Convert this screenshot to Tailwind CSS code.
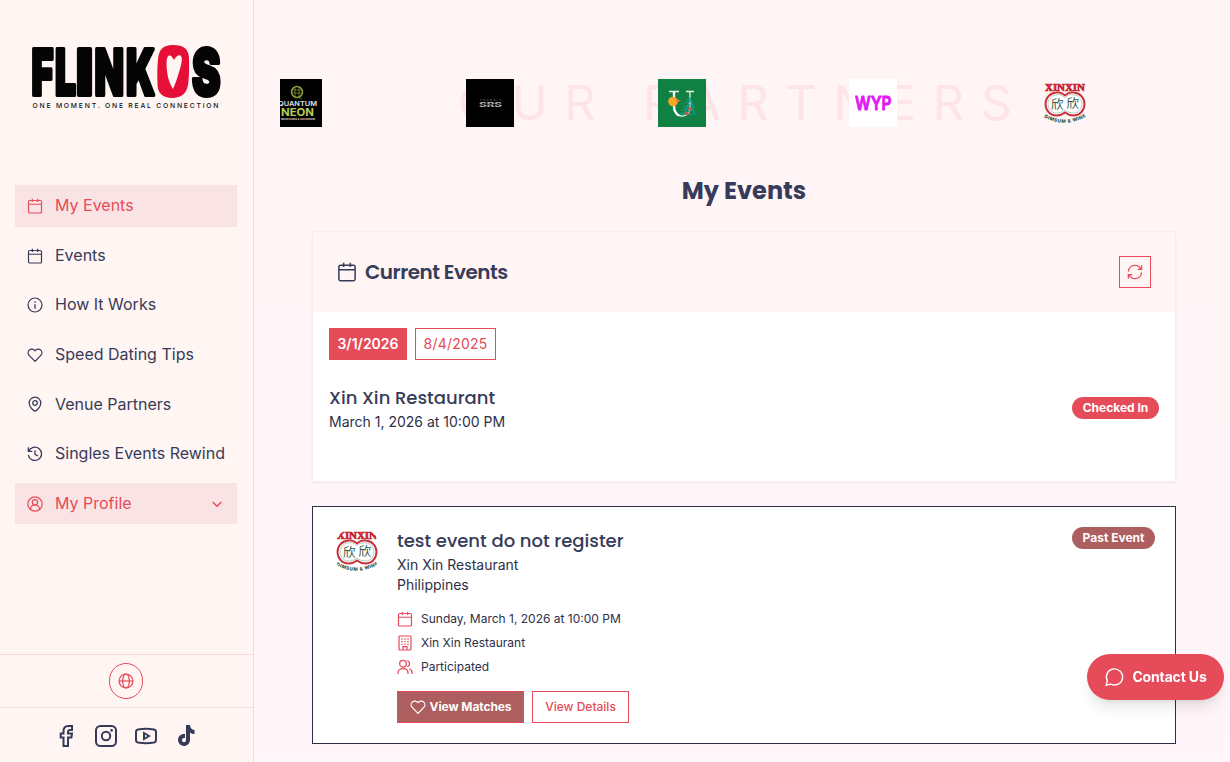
<!DOCTYPE html>
<html lang="en">
  <head>
    <meta charset="UTF-8" />
    <title>My Events - Flinkos</title>
    <meta name="viewport" content="width=device-width, initial-scale=1.0" />
    <script src="https://cdn.jsdelivr.net/npm/@tailwindcss/browser@4"></script>
  </head>

  <body class="flex h-screen overflow-hidden bg-linear-to-b from-[#fff5f5] to-[#fff5fa] font-['Inter',sans-serif] text-[#2d3048]">
    <!-- Shared icons -->
    <svg class="hidden">
      <symbol id="calendar" viewBox="0 0 24 24">
        <rect x="2.25" y="3.75" width="19.5" height="18.75" rx="2" />
        <path d="M2.25 9.4h19.5M8 1v5M16 1v5" />
      </symbol>
      <symbol id="heart" viewBox="0 0 24 24">
        <path d="M12 21.5 3.3 12.6a5.6 5.6 0 0 1 0-7.9 5.5 5.5 0 0 1 7.8 0l.9.9.9-.9a5.5 5.5 0 0 1 7.8 0 5.6 5.6 0 0 1 0 7.9Z" />
      </symbol>
      <symbol id="xinxin" viewBox="0 0 48 48">
        <text x="4" y="12" font-family="Liberation Serif, serif" font-weight="700" font-size="10.5" textLength="40" lengthAdjust="spacingAndGlyphs" fill="#c9252d" stroke="#c9252d" stroke-width=".7">XINXIN</text>
        <path d="M24 16.2c3-2.5 6-3.2 9-2.7 6.5.8 10.5 5.5 10.5 11.5s-4.5 11.500-11 11.500c-3.300 0-6-1-8.500-3-2.500 2-5.200 3-8.500 3-6.500 0-11-5.500-11-11.500s4-10.700 10.500-11.500c3-.5 6 .2 9 2.700Z" fill="#fff" stroke="#cb3038" stroke-width="1.900" />
        <path d="M24 18.500c3-2.600 6-3.300 9-2.600 5 .9 8 4.500 8 9.100s-3.500 9-8.500 9c-3.300 0-6-1-8.500-3-2.500 2-5.200 3-8.500 3-5 0-8.500-4.400-8.500-9s3-8.200 8-9.100c3-.7 6 0 9 2.600Z" fill="none" stroke="#89a49a" stroke-width=".6" />
        <text x="10" y="29.500" font-family="Noto Sans CJK SC, sans-serif" font-size="12.500" fill="#30584a">欣</text>
        <text x="25.500" y="29" font-family="Noto Sans CJK SC, sans-serif" font-size="12.500" fill="#30584a">欣</text>
        <path id="ring" d="M2.500 38Q24 50 46 37" fill="none" />
        <text font-family="Inter, sans-serif" font-weight="800" font-size="4.700" letter-spacing=".5" fill="#285344"><textPath href="#ring" startOffset="50%" text-anchor="middle">DIMSUM &amp; WINE</textPath></text>
      </symbol>
    </svg>

    <!-- Sidebar -->
    <aside class="flex w-[254px] shrink-0 flex-col border-r border-[#f5dadd] bg-[#fff5f3]">
      <div class="px-[30px] pt-10">
        <svg class="h-[72px] w-[194px]" viewBox="0 0 194 72">
          <g font-family="Inter, sans-serif" font-weight="900" font-size="63" fill="#050505" stroke="#050505" stroke-width="4" stroke-linejoin="round">
            <text x="1.500" y="54.600" textLength="22" lengthAdjust="spacingAndGlyphs">F</text>
            <text x="25" y="54.600" textLength="21" lengthAdjust="spacingAndGlyphs">L</text>
            <text x="46" y="54.600" textLength="17" lengthAdjust="spacingAndGlyphs">I</text>
            <text x="64.500" y="54.600" textLength="29.500" lengthAdjust="spacingAndGlyphs">N</text>
            <text x="96" y="54.600" textLength="29" lengthAdjust="spacingAndGlyphs">K</text>
            <text x="162" y="54.600" textLength="28.500" lengthAdjust="spacingAndGlyphs">S</text>
          </g>
          <path d="M143 5c11 0 15.500 4 16 13 .3 8 .1 18-.8 26-1.300 9-6.700 14-16.200 14s-14-5-14.500-13c-.4-9-.3-18 .5-26 1-9 4.500-14 15-14Z" fill="#e60f37" />
          <path d="M144 20c2-3.500 4.500-5.500 6.500-4.500 2.500 2 1 9-1 15-1.800 6.500-4 13-6.500 18.500-3-4.500-5.300-11-6-18-.6-7-.8-13 1.300-15 2-1.500 4 .5 5.700 4Z" fill="#fff5f3" />
          <text x="2.500" y="68" font-family="Inter, sans-serif" font-weight="500" font-size="6.800" textLength="186" fill="#111">ONE MOMENT. ONE REAL CONNECTION</text>
        </svg>
      </div>

      <nav class="mt-[73.200px] flex flex-col gap-2 px-[15px] pr-4 text-base leading-[25.6px] text-[#373b5a]">
        <a class="flex items-center gap-3 bg-[#fae3e5] px-3 py-2 text-[#e54b58]">
          <svg class="size-4 fill-none stroke-current stroke-[1.800]"><use href="#calendar" /></svg>
          My Events
        </a>
        <a class="flex items-center gap-3 px-3 py-2">
          <svg class="size-4 fill-none stroke-current stroke-[1.800]"><use href="#calendar" /></svg>
          Events
        </a>
        <a class="flex items-center gap-3 px-3 py-2">
          <svg class="size-4 fill-none stroke-current stroke-[1.800]" viewBox="0 0 24 24">
            <circle cx="12" cy="12" r="10.500" />
            <path d="M12 11v6.500M12 6.500v2" stroke-width="2" />
          </svg>
          How It Works
        </a>
        <a class="flex items-center gap-3 px-3 py-2">
          <svg class="size-4 fill-none stroke-current stroke-[1.900]"><use href="#heart" /></svg>
          Speed Dating Tips
        </a>
        <a class="flex items-center gap-3 px-3 py-2">
          <svg class="size-4 fill-none stroke-current stroke-[1.900]" viewBox="0 0 24 24">
            <path d="M12 22.500c-2 0-8.700-6-8.700-12a8.700 8.700 0 0 1 17.400 0c0 6-6.700 12-8.700 12Z" />
            <circle cx="12" cy="10.500" r="3.500" />
          </svg>
          Venue Partners
        </a>
        <a class="flex items-center gap-3 whitespace-nowrap px-3 py-2">
          <svg class="size-4 fill-none stroke-current stroke-[1.900]" viewBox="0 0 24 24">
            <path d="M2 2v6h6M2.500 8a10 10 0 1 1-.5 5.500M12 6.500v6l4.500 2.500" />
          </svg>
          Singles Events Rewind
        </a>
        <a class="flex items-center gap-3 bg-[#fae3e5] px-3 py-2 text-[#e54b58]">
          <svg class="size-4 fill-none stroke-current stroke-[1.800]" viewBox="0 0 24 24">
            <circle cx="12" cy="12" r="10.700" />
            <circle cx="12" cy="9.500" r="4" />
            <path d="M5 20c.5-4 3-6.500 7-6.500s6.500 2.500 7 6.500" />
          </svg>
          My Profile
          <svg class="ml-auto size-4 fill-none stroke-current stroke-2" viewBox="0 0 24 24"><path d="m5.500 9 6.500 6.500L18.500 9" /></svg>
        </a>
      </nav>

      <div class="mt-auto flex h-[53px] items-center justify-center border-t border-[#fad4d8] pr-0.5">
        <button class="flex h-9 w-[34px] items-center justify-center rounded-full border border-[#e54b58] text-[#e54b58]">
          <svg class="size-4 fill-none stroke-current stroke-[1.800]" viewBox="0 0 24 24">
            <circle cx="12" cy="12" r="10.500" />
            <ellipse cx="12" cy="12" rx="5" ry="10.500" />
            <path d="M1.500 12h21" />
          </svg>
        </button>
      </div>

      <div class="flex h-[55px] items-center justify-center gap-4 border-t border-[#f5dadd] pt-0.5 pr-0.5 text-[#373b5a]">
        <svg class="size-6 fill-none stroke-current stroke-2" viewBox="0 0 24 24">
          <path d="M9.500 22v-8.500H6.700V9.500h2.800V7c0-3.500 2-5 5-5H18v4h-2c-1.500 0-2 .7-2 2v1.500h4l-.6 4H14V22Z" />
        </svg>
        <svg class="size-6 fill-none stroke-current stroke-2" viewBox="0 0 24 24">
          <rect x="2" y="2" width="20" height="20" rx="4.500" />
          <circle cx="12" cy="12" r="4.200" />
          <circle cx="17.600" cy="6.400" r="1.300" class="fill-current stroke-none" />
        </svg>
        <svg class="size-6 fill-none stroke-current stroke-2" viewBox="0 0 24 24">
          <path d="M4 5.500c5-1 11-1 16 0 1.300.3 2 1 2 2.500v8c0 1.500-.7 2.200-2 2.500-5 1-11 1-16 0-1.300-.3-2-1-2-2.500V8c0-1.500.7-2.200 2-2.500Z" />
          <path d="m10 9 5 3-5 3Z" />
        </svg>
        <svg class="size-6 fill-current" viewBox="0 0 24 24">
          <path d="M12 1h4c.2 3 1.700 4.700 4.500 5v4c-1.700 0-3.100-.5-4.500-1.500v7c0 4.200-2.800 6.500-6 6.500a6 6 0 0 1-6-6c0-3.800 3-6.400 7-6v4c-1.800-.4-3 .5-3 2s1 2.200 2 2.200c1.300 0 2-.9 2-2.400Z" />
        </svg>
      </div>
    </aside>

    <main class="flex min-w-0 flex-1 flex-col items-center pl-1">
      <!-- Partners -->
      <section class="relative mt-[79px] h-12 w-[928px] shrink-0 overflow-hidden">
        <p class="absolute -top-3 left-[178px] whitespace-nowrap text-5xl leading-[72px] tracking-[17.100px] text-[#fee4e7]">OUR PARTNERS</p>
        <div class="relative -ml-1.5 flex gap-[143.800px]">
          <svg class="size-12 shrink-0 bg-black" viewBox="0 0 48 48">
            <circle cx="23" cy="13" r="5.500" fill="none" stroke="#8c9e3c" stroke-width="1.500" />
            <path d="M18 11h10M18 14h10M21 8v10M25 8v10M24 18l4 2" stroke="#8c9e3c" stroke-width=".7" />
            <g font-family="Inter, sans-serif">
              <text x="4" y="27" font-size="6.500" font-weight="600" textLength="39" lengthAdjust="spacingAndGlyphs" fill="#e4e4e4">QUANTUM</text>
              <text x="7" y="36.500" font-size="10.500" font-weight="700" textLength="33" lengthAdjust="spacingAndGlyphs" fill="#b5cc58">NEON</text>
              <text x="7" y="40.500" font-size="2.400" font-weight="700" textLength="34" lengthAdjust="spacingAndGlyphs" fill="#ddd">NEON SIGNS &amp; LED DESIGN</text>
            </g>
          </svg>
          <svg class="size-12 shrink-0 bg-black" viewBox="0 0 48 48" font-family="Inter, sans-serif">
            <text x="14" y="22.300" font-size="2.600" textLength="21" fill="#999">TRANSIT</text>
            <text x="13" y="27.500" font-size="5.800" font-weight="800" textLength="23" lengthAdjust="spacingAndGlyphs" fill="#b5b5b5">SRS</text>
            <path d="M13 25.400h23" stroke="#000" stroke-width=".6" />
          </svg>
          <svg class="size-12 shrink-0 bg-[#108043]" viewBox="0 0 48 48">
            <path d="M11 12.500h10M28 12.500h8M16 13v14c0 6 3 10 8 10 5.500 0 8-4 8-10V13" fill="none" stroke="#e9f3e5" stroke-width="1.300" />
            <path d="M16 13v14c0 5 2 8 5 9.500" fill="none" stroke="#fff" stroke-width="2.300" />
            <path d="m33 18-7 18M33 20l-4 1M34 22l-7 2M36 25l-11 3M37 28l-14 3M36 31l-14 4M35 35l-12 1M32 18l5 18" stroke="#16a09a" stroke-width="1" />
            <circle cx="15" cy="22.500" r="4.800" fill="#f5a623" />
            <path d="m18 20 5 1.500-4 2Z" fill="#e2783f" />
            <circle cx="32" cy="30" r="1.800" fill="#e05543" /><circle cx="29" cy="34.500" r="1.800" fill="#e05543" />
          </svg>
          <svg class="size-12 shrink-0 bg-white" viewBox="0 0 48 48">
            <text x="6" y="31" font-family="Inter, sans-serif" font-weight="600" font-size="19" textLength="36.500" lengthAdjust="spacingAndGlyphs" fill="#e019f5" stroke="#e019f5" stroke-width=".9" stroke-linejoin="round">WYP</text>
          </svg>
          <svg class="size-12 shrink-0"><use href="#xinxin" /></svg>
        </div>
      </section>

      <h1 class="mt-[46px] font-['Poppins','Inter',sans-serif] text-2xl font-bold leading-9 text-[#373b5a]">My Events</h1>

      <!-- Current events -->
      <section class="mt-[22px] h-[251px] w-[864px] shrink-0 border border-[#fbecee] bg-white shadow-xs">
        <div class="flex h-20 items-center bg-[#fff5f5] px-6 text-[#373b5a]">
          <svg class="mr-2 size-5 fill-none stroke-current stroke-[1.800]"><use href="#calendar" /></svg>
          <h2 class="font-['Poppins','Inter',sans-serif] text-xl font-semibold tracking-tight">Current Events</h2>
          <button class="ml-auto flex size-8 items-center justify-center border border-[#e54b58] text-[#e54b58]">
            <svg class="size-4 fill-none stroke-current stroke-[1.900]" viewBox="0 0 24 24">
              <path d="M2 11.500C2.500 5.500 7 2 12 2c4 0 7 2 9 5.500M22 2v6h-6M22 12.500C21.500 18.500 17 22 12 22c-4 0-7-2-9-5.500M2 22v-6h6" />
            </svg>
          </button>
        </div>
        <div class="p-4">
          <div class="flex gap-2 text-sm">
            <button class="h-8 w-[78px] bg-[#e54b58] font-semibold text-white">3/1/2026</button>
            <button class="h-8 w-[81px] border border-[#e54b58] tracking-[0.2px] text-[#e54b58]">8/4/2025</button>
          </div>
          <div class="mt-6 flex items-center justify-between">
            <div>
              <h3 class="font-['Poppins','Inter',sans-serif] text-lg font-medium leading-[27px] text-[#373b5a]">Xin Xin Restaurant</h3>
              <p class="text-sm leading-[22px]">March 1, 2026 at 10:00 PM</p>
            </div>
            <span class="mt-[-1px] flex h-[22px] w-[87px] items-center justify-center rounded-full bg-[#e54b58] text-xs font-bold text-white">Checked In</span>
          </div>
        </div>
      </section>

      <!-- Event card -->
      <section class="mt-6 flex h-[238px] w-[864px] shrink-0 items-start border border-[#2d3048] bg-white px-5 pt-5">
        <svg class="size-12 shrink-0 rounded-full"><use href="#xinxin" /></svg>
        <div class="ml-4">
          <h3 class="font-['Poppins','Inter',sans-serif] text-lg font-medium leading-[27px] text-[#373b5a]">test event do not register</h3>
          <p class="mt-px text-sm leading-5">Xin Xin Restaurant</p>
          <p class="text-sm leading-5">Philippines</p>
          <ul class="mt-3.5 flex flex-col gap-1 text-xs leading-5">
            <li class="flex items-center gap-2">
              <svg class="size-4 fill-none stroke-[#e54b58] stroke-[1.800]"><use href="#calendar" /></svg>
              Sunday, March 1, 2026 at 10:00 PM
            </li>
            <li class="flex items-center gap-2">
              <svg class="size-4 fill-none stroke-[#e54b58] stroke-[1.800]" viewBox="0 0 24 24">
                <rect x="3" y="1.500" width="18" height="21" rx="1.500" />
                <path d="M9 22v-4.500h6V22" />
                <path d="M6.500 6h2M11 6h2M15.500 6h2M6.500 10h2M11 10h2M15.500 10h2M6.500 14h2M11 14h2M15.500 14h2" stroke-width="2" />
              </svg>
              Xin Xin Restaurant
            </li>
            <li class="flex items-center gap-2">
              <svg class="size-4 fill-none stroke-[#e54b58] stroke-[1.900]" viewBox="0 0 24 24">
                <circle cx="9" cy="7" r="5" />
                <path d="M1.500 22.500v-2c0-4 3-6 7.500-6s7.500 2 7.500 6v2M15.500 2.300a5 5 0 0 1 0 9.400M18.500 15c2.700.8 4 2.500 4 5.500v2" />
              </svg>
              Participated
            </li>
          </ul>
          <div class="mt-3.5 flex gap-2 text-xs">
            <button class="flex h-8 w-[127px] items-center justify-center gap-1 border border-[#e54b58] bg-[#ad5e5e] font-bold tracking-[-0.100px] text-white">
              <svg class="size-4 fill-none stroke-current stroke-[1.800]"><use href="#heart" /></svg>
              View Matches
            </button>
            <button class="h-8 w-[97px] border border-[#e54b58] font-medium text-[#e54b58]">View Details</button>
          </div>
        </div>
        <span class="ml-auto flex h-[22px] w-[83px] items-center justify-center rounded-full bg-[#ad5e5e] text-xs font-bold text-white">Past Event</span>
      </section>
    </main>

    <button class="fixed right-1.5 bottom-[62px] flex h-[46px] w-[137px] items-center justify-center gap-2 rounded-full bg-[#e54b58] text-sm font-bold tracking-[-0.150px] text-white shadow-lg">
      <svg class="size-5 fill-none stroke-current stroke-[1.700]" viewBox="0 0 24 24">
        <path d="M2.500 22 4 16.500A9.700 9.700 0 1 1 8 20.500Z" />
      </svg>
      Contact Us
    </button>
  </body>
</html>
